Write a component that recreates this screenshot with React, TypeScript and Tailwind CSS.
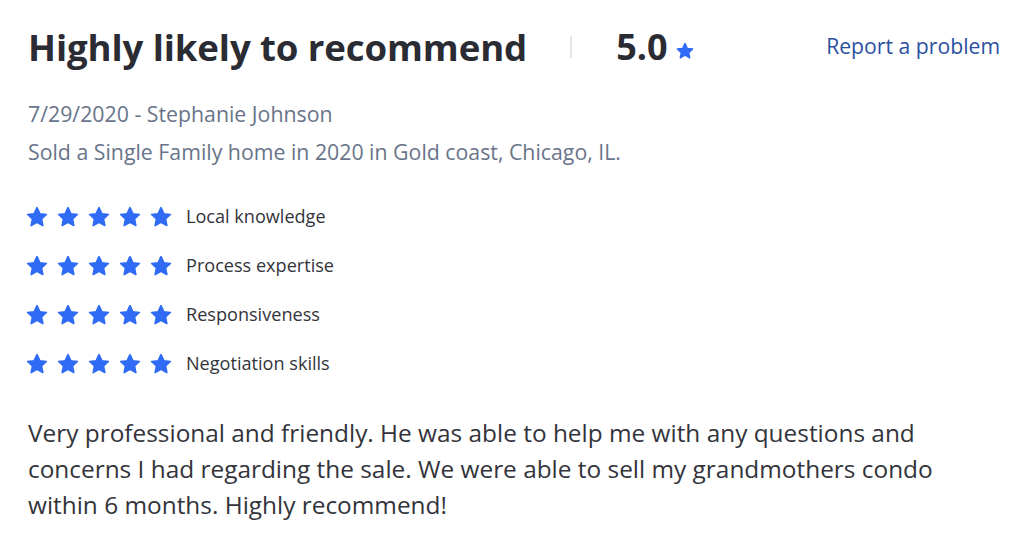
import React from "react";

const Star = ({ size = 21 }: { size?: number }) => (
  <svg width={size} height={size} viewBox="0 0 24 24" className="shrink-0">
    <path
      d="M12 1.8l3.05 6.6 7.2.85-5.33 4.93 1.42 7.12L12 17.7l-6.34 3.6 1.42-7.12L1.75 9.25l7.2-.85z"
      fill="#2f6bf5"
      stroke="#2f6bf5"
      strokeWidth="1.8"
      strokeLinejoin="round"
    />
  </svg>
);

const rows = ["Local knowledge", "Process expertise", "Responsiveness", "Negotiation skills"];

export default function App() {
  return (
    <div
      className="w-[1024px] h-[535px] bg-white overflow-hidden pl-[28px] pr-[24px] pt-[24px]"
      style={{ fontFamily: '"Open Sans", sans-serif' }}
    >
      <div className="flex items-center justify-between">
        <div className="flex items-center">
          <h1 className="text-[36.6px] font-bold text-[#2a2b33] leading-[46px] tracking-[-0.1px]">
            Highly likely to recommend
          </h1>
          <div className="w-[2px] h-[22px] bg-[#e3e5e8] ml-[43px] mr-[44px]" />
          <span className="text-[36px] font-bold text-[#2a2b33] leading-[46px]">5.0</span>
          <span className="ml-[8px] mt-[8px]">
            <Star size={18} />
          </span>
        </div>
        <a className="text-[21.2px] text-[#2c50a0] leading-[28px] -mt-[2px]">Report a problem</a>
      </div>

      <div className="mt-[25px] text-[21.3px] leading-[38px] text-[#687489]">
        <div>7/29/2020 - Stephanie Johnson</div>
        <div>Sold a Single Family home in 2020 in Gold coast, Chicago, IL.</div>
      </div>

      <div className="mt-[34px] flex flex-col gap-[25px]">
        {rows.map((r) => (
          <div key={r} className="flex items-center h-[24px]">
            <div className="flex gap-[9px] -ml-[2px]">
              {[0, 1, 2, 3, 4].map((i) => (
                <Star key={i} size={22} />
              ))}
            </div>
            <span className="ml-[14px] text-[18.1px] text-[#33343b]">{r}</span>
          </div>
        ))}
      </div>

      <p className="mt-[39px] text-[24.4px] leading-[36px] text-[#33343b] w-[940px]">
        Very professional and friendly. He was able to help me with any questions and concerns I had regarding the sale. We were able to sell my grandmothers condo within 6 months. Highly recommend!
      </p>
    </div>
  );
}
